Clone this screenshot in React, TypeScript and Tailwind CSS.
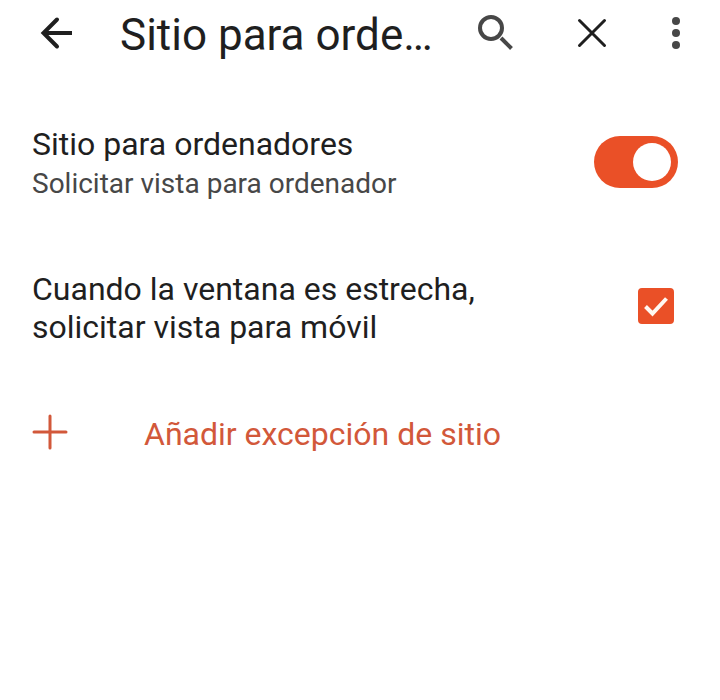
import { useState } from 'react';

export default function App() {
  const [desktop, setDesktop] = useState(true);
  const [mobile, setMobile] = useState(true);

  return (
    <div className="min-h-screen bg-white font-[Roboto,sans-serif] text-[#1f1f1f]">
      <header className="flex h-[66px] items-center pl-8 pr-5">
        <button type="button" aria-label="Atrás" className="shrink-0">
          <svg viewBox="0 0 48 48" className="size-12" fill="none" stroke="currentColor" strokeWidth="4">
            <path d="M40 24H12" />
            <path d="M25 10.5L11.500 24L25 37.500" strokeLinecap="round" />
          </svg>
        </button>
        <h1 className="ml-10 min-w-0 flex-1 truncate pt-1 text-[44px]">Sitio para orde…</h1>
        <button type="button" aria-label="Buscar" className="ml-9 shrink-0">
          <svg viewBox="0 0 48 48" className="size-12" fill="none" stroke="#474747" strokeWidth="4">
            <circle cx="19" cy="19" r="11" />
            <path d="M29 29L39.500 39.500" />
          </svg>
        </button>
        <button type="button" aria-label="Cerrar" className="ml-12 shrink-0">
          <svg viewBox="0 0 48 48" className="size-12" fill="none" stroke="currentColor" strokeWidth="3" strokeLinecap="round">
            <path d="M11.500 11.500L36.500 36.500M36.500 11.500L11.500 36.500" />
          </svg>
        </button>
        <button type="button" aria-label="Más opciones" className="ml-9 shrink-0">
          <svg viewBox="0 0 48 48" className="size-12" fill="#474747">
            <circle cx="24" cy="12" r="4" />
            <circle cx="24" cy="24" r="4" />
            <circle cx="24" cy="36" r="4" />
          </svg>
        </button>
      </header>

      <main className="flex flex-col gap-[66px] px-8 pt-[58px]">
        <label className="flex items-start justify-between gap-8">
          <span>
            <span className="block text-[32px] leading-10">Sitio para ordenadores</span>
            <span className="block text-[28px] leading-10 text-[#474747]">Solicitar vista para ordenador</span>
          </span>
          <input
            type="checkbox"
            role="switch"
            checked={desktop}
            onChange={(e) => setDesktop(e.target.checked)}
            className="mr-2.5 mt-3 flex h-13 w-21 shrink-0 appearance-none items-center rounded-full bg-[#bdbdbd] px-[7px] before:size-[38px] before:rounded-full before:bg-white checked:justify-end checked:bg-[#ea5027]"
          />
        </label>

        <label className="flex items-start justify-between gap-8">
          <span className="max-w-[480px] text-[32px] leading-[38px]">
            Cuando la ventana es estrecha, solicitar vista para móvil
          </span>
          <span className="mr-3.5 mt-[18px] grid shrink-0">
            <input
              type="checkbox"
              checked={mobile}
              onChange={(e) => setMobile(e.target.checked)}
              className="peer col-start-1 row-start-1 size-9 appearance-none rounded border-4 border-[#757575] checked:border-[#ea5027] checked:bg-[#ea5027]"
            />
            <svg
              viewBox="0 0 36 36"
              className="pointer-events-none col-start-1 row-start-1 hidden size-9 peer-checked:block"
              fill="none"
              stroke="#fff8f2"
              strokeWidth="4"
            >
              <path d="M7.500 18.500L14.500 25.500L28.500 10.500" />
            </svg>
          </span>
        </label>

        <button type="button" className="flex items-start gap-19 text-left text-[32px] leading-11 text-[#d2583a]">
          <svg viewBox="0 0 36 40" className="h-10 w-9 shrink-0" fill="none" stroke="currentColor" strokeWidth="3" strokeLinecap="round">
            <path d="M2 20H34M18 4V36" />
          </svg>
          Añadir excepción de sitio
        </button>
      </main>
    </div>
  );
}
